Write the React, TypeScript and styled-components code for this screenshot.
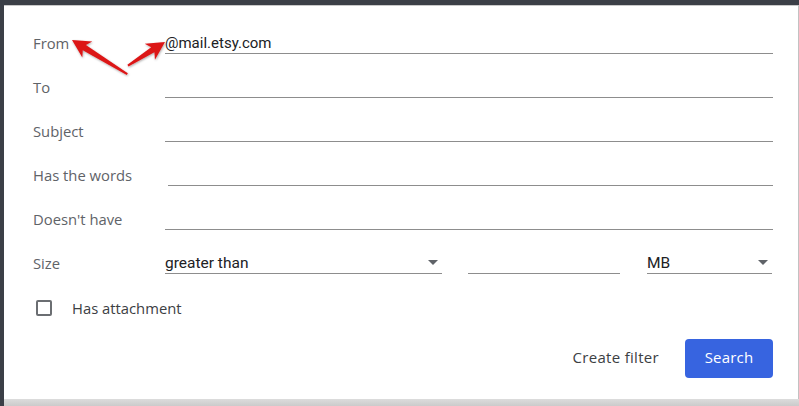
import React from "react";
import styled, { createGlobalStyle } from "styled-components";

const GlobalStyle = createGlobalStyle`
  html, body { margin: 0; padding: 0; }
  body {
    background: #3b3f47;
    font-family: "Open Sans", Roboto, "Liberation Sans", Arial, sans-serif;
    overflow: hidden;
  }
`;

const Frame = styled.div`
  position: relative;
  width: 799px;
  height: 406px;
  padding: 5px 0 0 4px;
  box-sizing: border-box;
`;

const Backdrop = styled.div`
  background: linear-gradient(#dcdcdc, #cbcbcb) bottom / 100% 7px no-repeat, #d4d4d4;
  height: 401px;
  width: 795px;
`;

const Panel = styled.div`
  background: #ffffff;
  border-top: 1px solid #c9c9c9;
  border-right: 1px solid #c2c2c2;
  height: 394px;
  box-sizing: border-box;
  padding: 4px 25px 0 29px;
  display: flex;
  flex-direction: column;
`;

const Row = styled.div`
  display: grid;
  grid-template-columns: 132px 1fr;
  align-items: end;
  height: 44px;
`;

const Label = styled.label`
  font-family: "Open Sans", Roboto, sans-serif;
  font-size: 14.8px;
  line-height: 20px;
  padding-bottom: 1px;
  color: #5f6368;
`;

const TextInput = styled.input<{ $indent?: number }>`
  border: none;
  border-bottom: 1px solid #8d8d8d;
  outline: none;
  padding: 0;
  margin: 0 0 0 ${(p) => p.$indent ?? 0}px;
  height: 21px;
  box-sizing: border-box;
  font-family: Roboto, "Liberation Sans", Arial, sans-serif;
  font-size: 15px;
  color: #202124;
  background: transparent;
  width: calc(100% - ${(p) => p.$indent ?? 0}px);
`;

const SizeControls = styled.div`
  display: flex;
  align-items: end;
`;

const Select = styled.div<{ $w: number }>`
  width: ${(p) => p.$w}px;
  height: 21px;
  box-sizing: border-box;
  border-bottom: 1px solid #8d8d8d;
  display: flex;
  align-items: center;
  justify-content: space-between;
  font-family: Roboto, "Liberation Sans", Arial, sans-serif;
  font-size: 15.5px;
  color: #202124;
  padding-right: 4px;
`;

const Caret = styled.span`
  width: 0;
  height: 0;
  border-left: 5px solid transparent;
  border-right: 5px solid transparent;
  border-top: 5px solid #5f6368;
  margin-bottom: 2px;
`;

const SmallInput = styled(TextInput)`
  width: 152px;
  margin: 0 27px 0 26px;
`;

const CheckRow = styled.label`
  display: flex;
  align-items: center;
  gap: 20px;
  margin-top: 26px;
  padding-left: 3px;
  height: 16px;
  font-family: "Open Sans", Roboto, sans-serif;
  font-size: 14.8px;
  line-height: 16px;
  color: #3c4043;
`;

const Box = styled.span`
  width: 16px;
  height: 16px;
  box-sizing: border-box;
  border: 2px solid #6b6e72;
  border-radius: 2px;
`;

const Footer = styled.div`
  display: flex;
  justify-content: flex-end;
  align-items: center;
  gap: 26px;
  margin-top: 23px;
`;

const TextButton = styled.span`
  font-family: "Open Sans", Roboto, sans-serif;
  font-size: 15px;
  font-weight: 500;
  letter-spacing: 0.3px;
  line-height: 20px;
  padding-bottom: 3px;
  color: #3c4043;
`;

const PrimaryButton = styled.button`
  width: 88px;
  height: 39px;
  border: none;
  border-radius: 4px;
  background: #3764e0;
  color: #ffffff;
  font-family: "Open Sans", Roboto, sans-serif;
  font-size: 15px;
  font-weight: 500;
  letter-spacing: 0.2px;
  padding: 0 0 3px;
`;

const ArrowLayer = styled.svg`
  position: absolute;
  left: 0;
  top: 0;
  pointer-events: none;
  overflow: visible;
`;

const arrowShape = (L: number) =>
  `0,0 -18,-9.5 -14.5,-3 -${L},-1 -${L},1 -14.5,3 -18,9.5`;

function Arrows() {
  return (
    <ArrowLayer width="200" height="100" viewBox="0 0 200 100">
      <defs>
        <filter id="sh" x="-20%" y="-20%" width="140%" height="140%">
          <feDropShadow dx="0.6" dy="1" stdDeviation="0.8" floodColor="#000" floodOpacity="0.35" />
        </filter>
      </defs>
      <g filter="url(#sh)">
        <polygon
          points={arrowShape(65)}
          fill="#dc1619"
          transform="translate(72 40) rotate(211.7)"
        />
        <polygon
          points={arrowShape(44)}
          fill="#dc1619"
          transform="translate(165 42) rotate(-32.6)"
        />
      </g>
    </ArrowLayer>
  );
}

const fields: { label: string; value?: string; indent?: number }[] = [
  { label: "From", value: "@mail.etsy.com" },
  { label: "To" },
  { label: "Subject" },
  { label: "Has the words", indent: 3 },
  { label: "Doesn't have" },
];

export default function App() {
  return (
    <>
      <GlobalStyle />
      <Frame>
        <Backdrop>
          <Panel>
            {fields.map((f) => (
              <Row key={f.label}>
                <Label>{f.label}</Label>
                <TextInput defaultValue={f.value ?? ""} $indent={f.indent} />
              </Row>
            ))}
            <Row>
              <Label>Size</Label>
              <SizeControls>
                <Select $w={277}>
                  <span>greater than</span>
                  <Caret />
                </Select>
                <SmallInput defaultValue="" />
                <Select $w={125}>
                  <span>MB</span>
                  <Caret />
                </Select>
              </SizeControls>
            </Row>
            <CheckRow>
              <Box />
              Has attachment
            </CheckRow>
            <Footer>
              <TextButton>Create filter</TextButton>
              <PrimaryButton>Search</PrimaryButton>
            </Footer>
          </Panel>
        </Backdrop>
        <Arrows />
      </Frame>
    </>
  );
}
